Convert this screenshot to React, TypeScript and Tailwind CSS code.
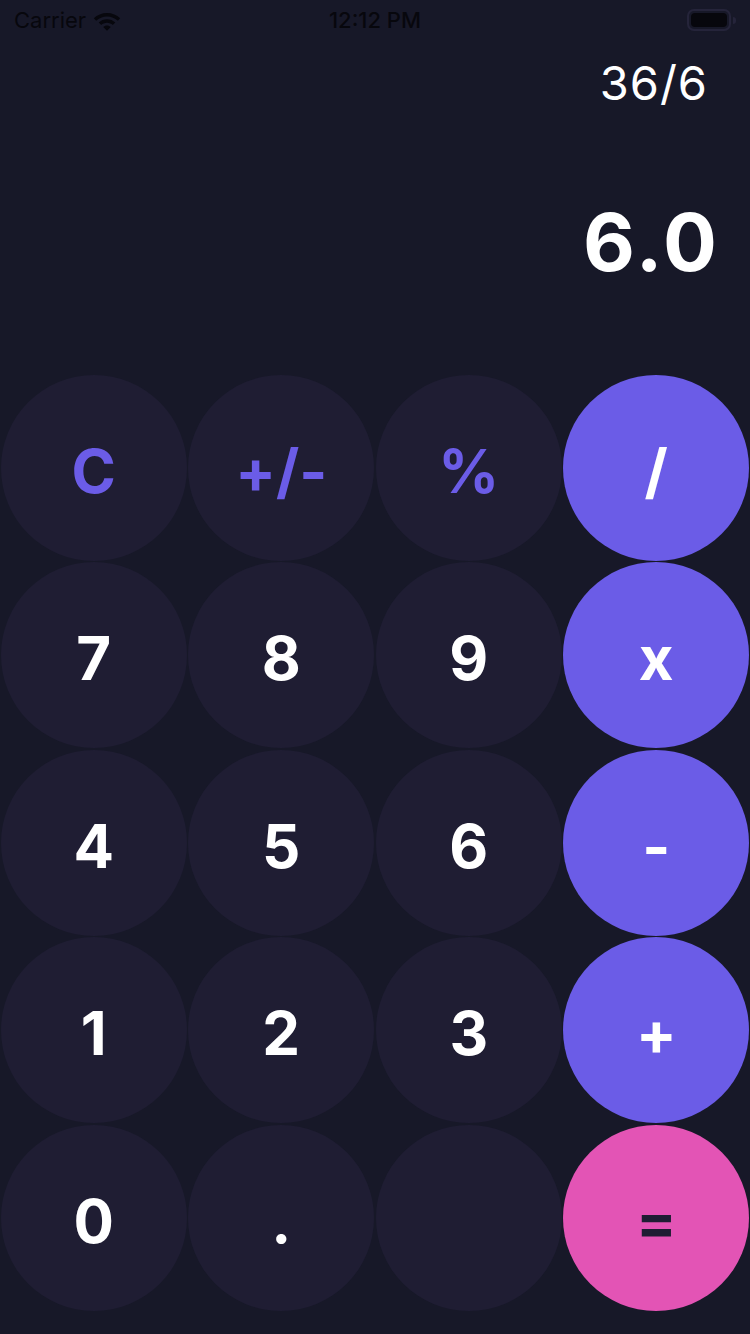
import { useState } from "react";

type Kind = "fn" | "num" | "op" | "eq" | "blank";

const keys: { label: string; kind: Kind }[] = [
  { label: "C", kind: "fn" },
  { label: "+/-", kind: "fn" },
  { label: "%", kind: "fn" },
  { label: "/", kind: "op" },
  { label: "7", kind: "num" },
  { label: "8", kind: "num" },
  { label: "9", kind: "num" },
  { label: "x", kind: "op" },
  { label: "4", kind: "num" },
  { label: "5", kind: "num" },
  { label: "6", kind: "num" },
  { label: "-", kind: "op" },
  { label: "1", kind: "num" },
  { label: "2", kind: "num" },
  { label: "3", kind: "num" },
  { label: "+", kind: "op" },
  { label: "0", kind: "num" },
  { label: ".", kind: "num" },
  { label: "", kind: "blank" },
  { label: "=", kind: "eq" },
];

const keyStyles: Record<Kind, string> = {
  fn: "bg-[#1f1d33] text-[#6b5ce7]",
  num: "bg-[#1f1d33] text-white",
  blank: "bg-[#1f1d33] text-white",
  op: "bg-[#6b5ce7] text-white",
  eq: "bg-[#e354b5] text-[#1f1d33]",
};

function StatusBar() {
  return (
    <div className="relative flex h-[40px] items-center justify-between px-[14px] text-[22px] text-[#07070d]">
      <div className="flex items-center gap-[6px]">
        <span>Carrier</span>
        <svg width="30" height="22" viewBox="0 0 30 22" fill="#07070d">
          <path d="M15 4C9.8 4 5.2 6 1.8 9.3L4.2 11.7C7 9 10.8 7.4 15 7.4s8 1.6 10.8 4.3l2.4-2.4C24.8 6 20.2 4 15 4z" />
          <path d="M15 10.3c-3.2 0-6.1 1.2-8.3 3.3l2.5 2.5c1.5-1.4 3.5-2.3 5.8-2.3s4.3.9 5.8 2.3l2.5-2.5c-2.2-2.1-5.1-3.3-8.3-3.3z" />
          <path d="M15 16.4c-1.5 0-2.8.6-3.8 1.5L15 21.7l3.8-3.8c-1-.9-2.3-1.5-3.8-1.5z" />
        </svg>
      </div>
      <span className="absolute left-1/2 -translate-x-1/2 font-medium">12:12 PM</span>
      <div className="flex items-center gap-[2px]">
        <div className="flex h-[22px] w-[44px] items-center rounded-[7px] border-2 border-[#25243a] p-[2px]">
          <div className="h-full w-full rounded-[4px] bg-[#07070d]" />
        </div>
        <div className="h-[7px] w-[3px] rounded-r-sm bg-[#25243a]" />
      </div>
    </div>
  );
}

export default function App() {
  const [expr] = useState("36/6");
  const [result] = useState("6.0");

  return (
    <div
      className="flex h-[1334px] w-[750px] flex-col bg-[#171828]"
      style={{ fontFamily: "Inter, 'Liberation Sans', sans-serif" }}
    >
      <StatusBar />
      <div className="flex h-[334px] flex-col items-end">
        <div className="pr-[42px] pt-[13px] text-[47px] leading-[60px] tracking-[1px] text-white">{expr}</div>
        <div className="pr-[30px] pt-[84px] text-[80px] font-bold leading-[90px] tracking-[3px] text-white">
          {result}
        </div>
      </div>
      <div className="grid grid-cols-4">
        {keys.map((k, i) => (
          <div key={i} className="flex h-[187.5px] items-center justify-center">
            <button
              className={`flex h-[186px] w-[186px] items-center justify-center rounded-full pt-[6px] text-[60px] font-bold ${keyStyles[k.kind]}`}
            >
              {k.label}
            </button>
          </div>
        ))}
      </div>
    </div>
  );
}
